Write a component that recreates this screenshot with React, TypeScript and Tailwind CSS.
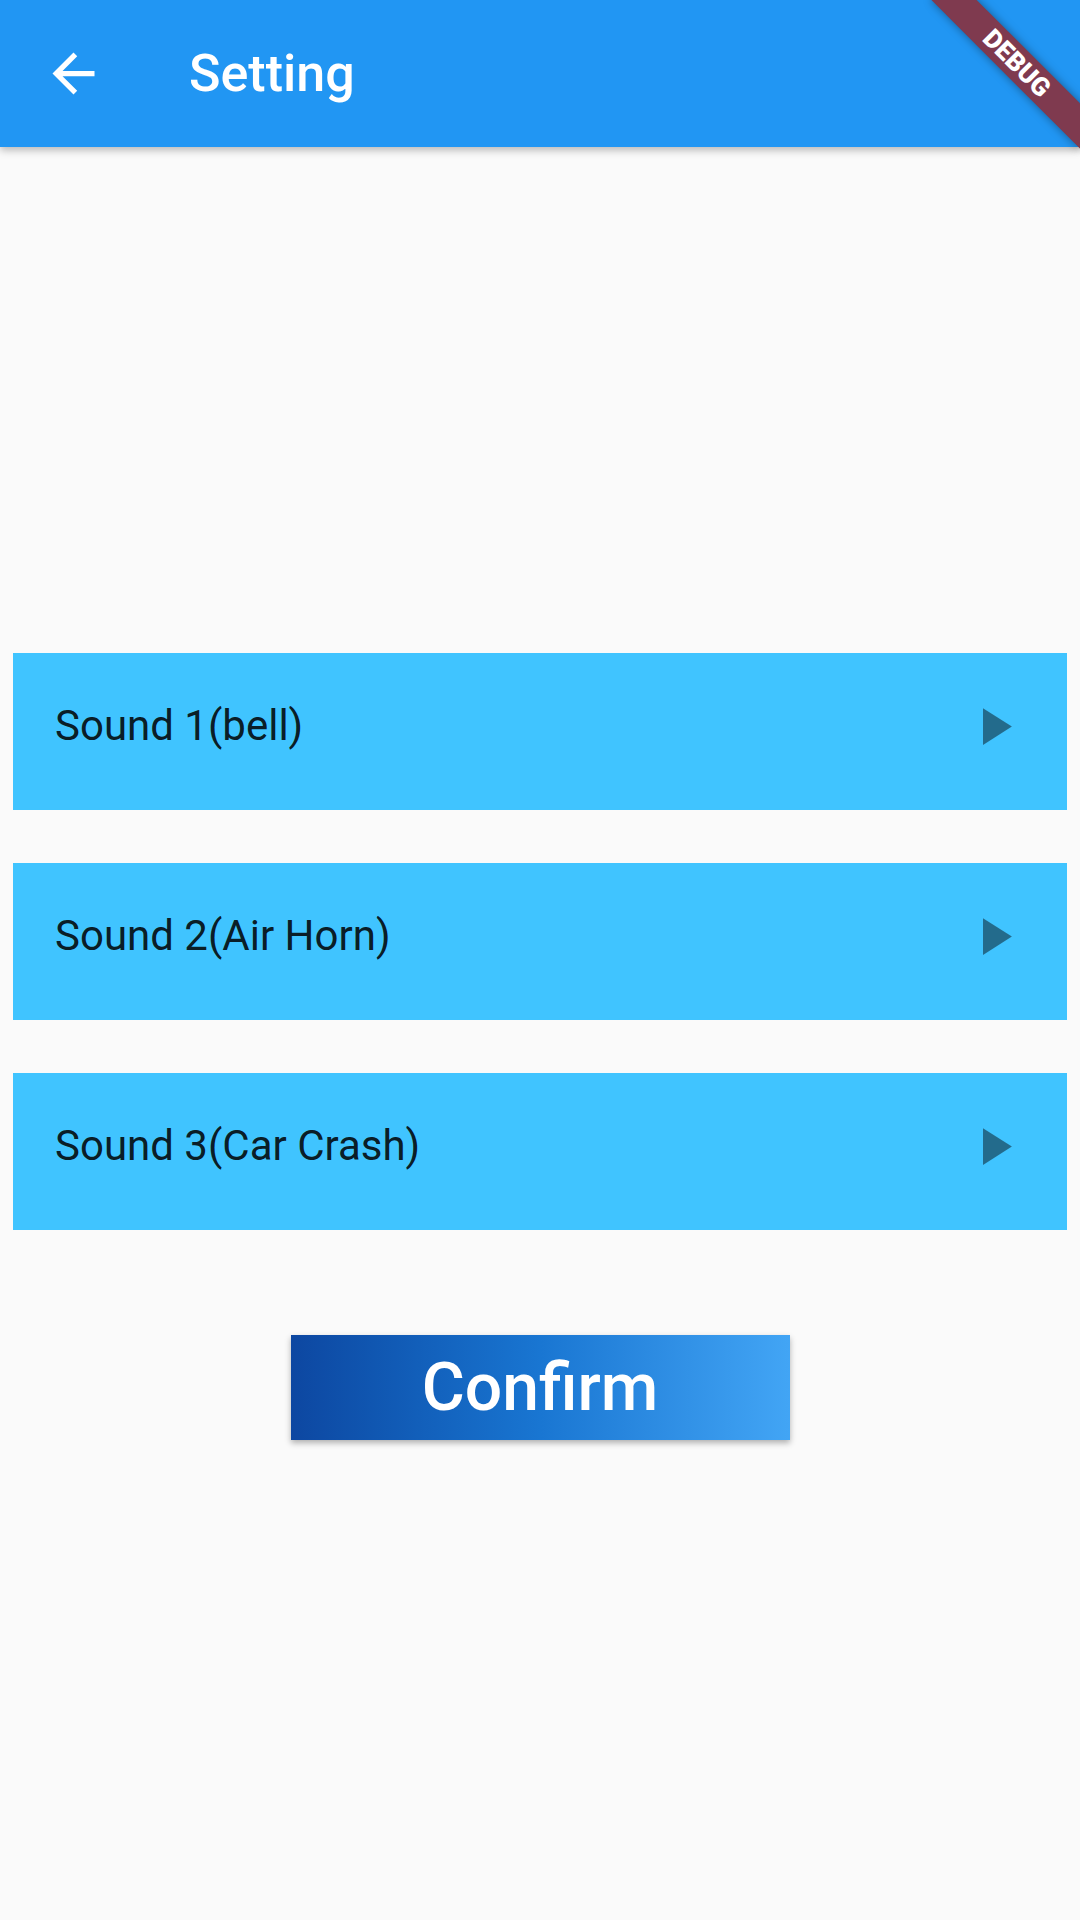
import React from "react";

const sounds = ["Sound 1(bell)", "Sound 2(Air Horn)", "Sound 3(Car Crash)"];

const SettingPage = () => {
  return (
    <div className="relative w-[1080px] h-[1920px] overflow-hidden bg-[#fafafa] font-['Roboto','Liberation_Sans',sans-serif]">
      <header className="relative z-10 h-[147px] bg-[#2196f3] flex items-center shadow-[0_3px_8px_rgba(0,0,0,0.28)]">
        <div className="ml-[42px] w-[63px] h-[63px]">
          <svg viewBox="0 0 24 24" width="63" height="63" fill="#ffffff">
            <path d="M20 11H7.83l5.59-5.59L12 4l-8 8 8 8 1.41-1.41L7.83 13H20v-2z" />
          </svg>
        </div>
        <h1 className="ml-[84px] text-[52px] font-medium text-white leading-none">Setting</h1>
      </header>

      <div className="mt-[506px] px-[13px] flex flex-col gap-[53px]">
        {sounds.map((s) => (
          <div
            key={s}
            className="h-[157px] bg-[#40c4ff] flex items-center justify-between pl-[42px] pr-[42px] pb-[11px]"
          >
            <span className="text-[42px] text-black/[0.87] leading-none">{s}</span>
            <svg viewBox="0 0 24 24" width="63" height="63" fill="rgba(0,0,0,0.45)">
              <path d="M8 5v14l11-7z" />
            </svg>
          </div>
        ))}
      </div>

      <div className="mt-[105px] flex justify-center">
        <button className="w-[499px] h-[105px] bg-linear-to-r from-[#0d47a1] via-[#1976d2] to-[#42a5f5] flex items-center justify-center shadow-[0_3px_6px_rgba(0,0,0,0.3)]">
          <span className="text-[66px] font-medium text-white leading-none">Confirm</span>
        </button>
      </div>

      {/* debug banner */}
      <div className="absolute z-20 left-[912px] top-[47px] w-[210px] h-[32px] rotate-45 bg-[#7f3a4f] shadow-[0_0_10px_rgba(0,0,0,0.4)] flex items-center justify-center">
        <span className="text-[26px] font-black text-white leading-none">DEBUG</span>
      </div>
    </div>
  );
};

export default SettingPage;
